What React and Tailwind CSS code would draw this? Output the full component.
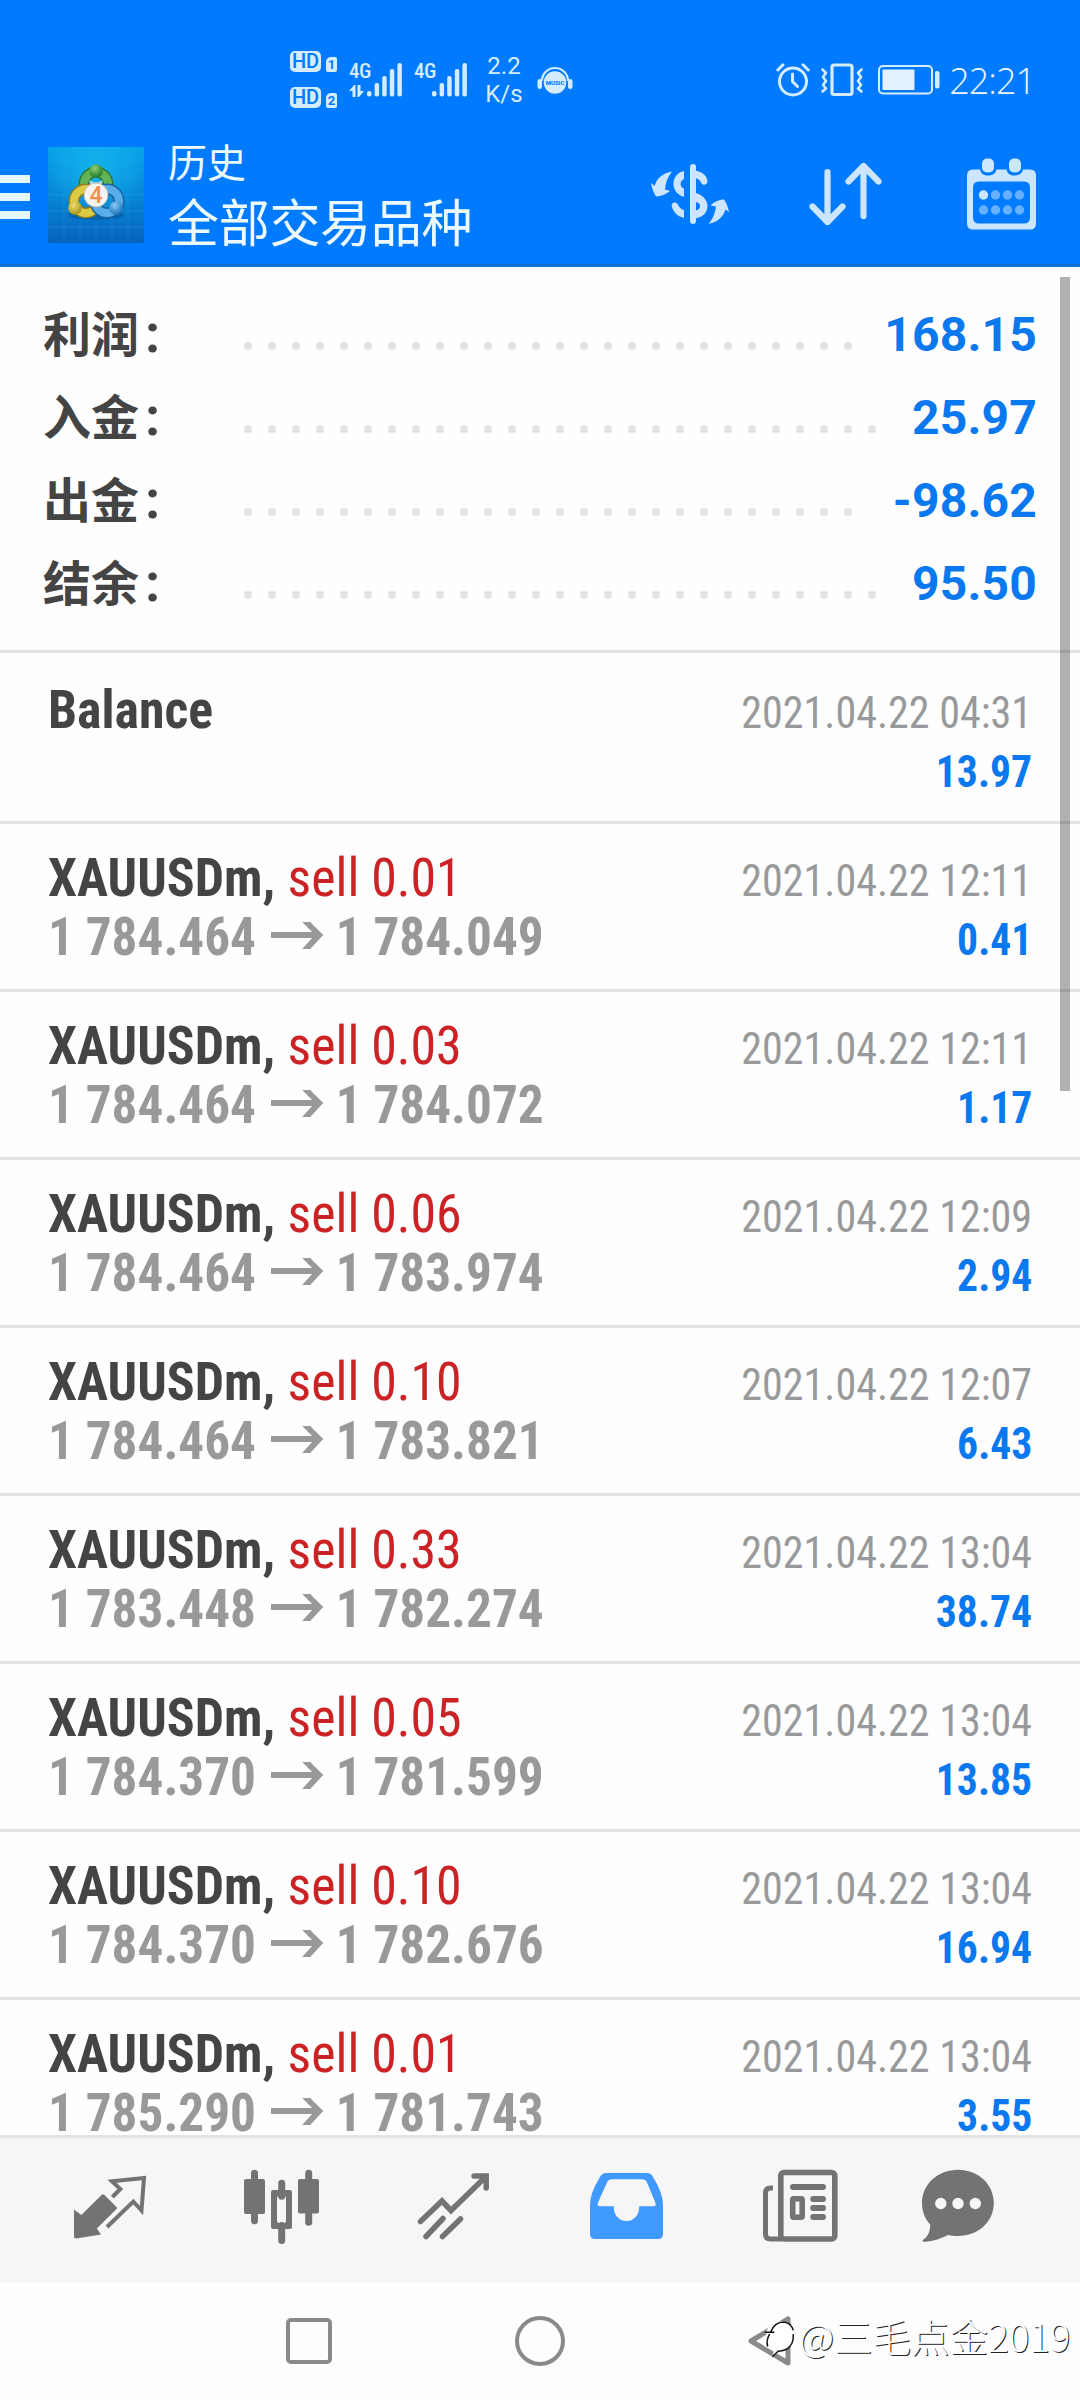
const summary = [
  { label: "利润", value: "168.15", dots: 26 },
  { label: "入金", value: "25.97", dots: 27 },
  { label: "出金", value: "-98.62", dots: 26 },
  { label: "结余", value: "95.50", dots: 27 },
];

const deals = [
  { title: "Balance", date: "2021.04.22 04:31", profit: "13.97" },
  { title: "XAUUSDm,", side: "sell 0.01", open: "1 784.464", close: "1 784.049", date: "2021.04.22 12:11", profit: "0.41" },
  { title: "XAUUSDm,", side: "sell 0.03", open: "1 784.464", close: "1 784.072", date: "2021.04.22 12:11", profit: "1.17" },
  { title: "XAUUSDm,", side: "sell 0.06", open: "1 784.464", close: "1 783.974", date: "2021.04.22 12:09", profit: "2.94" },
  { title: "XAUUSDm,", side: "sell 0.10", open: "1 784.464", close: "1 783.821", date: "2021.04.22 12:07", profit: "6.43" },
  { title: "XAUUSDm,", side: "sell 0.33", open: "1 783.448", close: "1 782.274", date: "2021.04.22 13:04", profit: "38.74" },
  { title: "XAUUSDm,", side: "sell 0.05", open: "1 784.370", close: "1 781.599", date: "2021.04.22 13:04", profit: "13.85" },
  { title: "XAUUSDm,", side: "sell 0.10", open: "1 784.370", close: "1 782.676", date: "2021.04.22 13:04", profit: "16.94" },
  { title: "XAUUSDm,", side: "sell 0.01", open: "1 785.290", close: "1 781.743", date: "2021.04.22 13:04", profit: "3.55" },
];

function HdBadge({ sim }) {
  return (
    <div className="flex items-end gap-[5px]">
      <span className="w-[31px] h-[21px] rounded-[5px] bg-[#d5ecff] text-[#007aff] text-[20px] leading-[21px] text-center font-medium">
        HD
      </span>
      <span className="w-[11px] h-[15px] rounded-[2px] rounded-tl-[5px] bg-[#d5ecff] text-[#007aff] text-[13px] leading-[15px] text-center font-bold">
        {sim}
      </span>
    </div>
  );
}

function Signal({ data }) {
  return (
    <div className="flex items-end h-[34px]">
      <div className="w-[18px] h-[34px] flex flex-col justify-between">
        <span className="font-['Roboto_Condensed'] font-medium text-[21px] leading-[16px] tracking-[-0.5px]">4G</span>
        {data && (
          <svg width="16" height="12" viewBox="0 0 16 12" fill="currentColor">
            <path d="M0 6 L5 0 H6.5 V12 H3.5 V6 Z M8.500 0 H11.500 V6 H15 L10 12 H8.500 Z" />
          </svg>
        )}
      </div>
      <svg width="35" height="34" viewBox="0 0 35 34" fill="currentColor">
        <rect x="0" y="28" width="4.500" height="5.500" rx="2" />
        <rect x="7.600" y="20" width="4.500" height="13.500" rx="2" />
        <rect x="15.200" y="13" width="4.500" height="20.500" rx="2" />
        <rect x="22.800" y="6" width="4.500" height="27.500" rx="2" />
        <rect x="30.400" y="0" width="4.500" height="33.500" rx="2" />
      </svg>
    </div>
  );
}

function StatusBar() {
  return (
    <div className="h-[130px] pt-[29px] pl-[290px] pr-[45px] flex items-center text-[#d5ecff] font-['Roboto',sans-serif]">
      <div className="flex flex-col gap-[15px]">
        <HdBadge sim="1" />
        <HdBadge sim="2" />
      </div>
      <div className="ml-3 flex gap-3">
        <Signal data />
        <Signal />
      </div>
      <div className="ml-[18px] w-[38px] text-center text-[24px] leading-[28px] whitespace-nowrap">
        <p>2.2</p>
        <p>K/s</p>
      </div>
      <svg className="ml-[14px]" width="36" height="28" viewBox="0 0 36 28">
        <path d="M5 15 A13 13 0 0 1 31 15" fill="none" stroke="currentColor" strokeWidth="2.200" />
        <rect x="0.500" y="13" width="4.500" height="10" rx="2.200" fill="currentColor" />
        <rect x="31" y="13" width="4.500" height="10" rx="2.200" fill="currentColor" />
        <circle cx="18" cy="16.500" r="11.200" fill="currentColor" />
        <text x="18" y="18.600" textAnchor="middle" fontSize="6" fontWeight="800" fill="#007aff">MUSIC</text>
      </svg>
      <div className="ml-auto flex items-center">
        <svg width="34" height="34" viewBox="0 0 34 34" fill="none" stroke="currentColor" strokeWidth="3" strokeLinecap="round" strokeLinejoin="round">
          <circle cx="17" cy="18.500" r="13.500" />
          <path d="M16.500 11 V18.500 L21.500 23.500" />
          <path d="M1.800 7 L7 1.800 M27 1.800 L32.200 7" />
        </svg>
        <svg className="ml-[10px]" width="44" height="34" viewBox="0 0 44 34" fill="none" stroke="currentColor" strokeWidth="3.200" strokeLinecap="round" strokeLinejoin="round">
          <rect x="12" y="2" width="20" height="29.500" rx="2" />
          <path strokeWidth="2.600" d="M2.500 6.500 L6 10 L3 14 L6 18 L3 22 L6 25.500 L2.500 28.500 M41.500 6.500 L38 10 L41 14 L38 18 L41 22 L38 25.500 L41.500 28.500" />
        </svg>
        <svg className="ml-[14px]" width="64" height="30" viewBox="0 0 64 30">
          <rect x="1" y="1" width="53" height="27.500" rx="4" fill="none" stroke="currentColor" strokeWidth="2" />
          <rect x="4.500" y="4.500" width="32" height="20.500" rx="1" fill="#e2f0ff" />
          <rect x="57" y="6" width="4.500" height="17.500" rx="2" fill="currentColor" />
        </svg>
        <span className="ml-[7px] pt-0.5 font-['Open_Sans',sans-serif] font-light text-[36px] leading-[40px] tracking-[-1px] text-[#eaf6ff]">22:21</span>
      </div>
    </div>
  );
}

function AppLogo() {
  return (
    <svg width="96" height="96" viewBox="0 0 96 96">
      <defs>
        <linearGradient id="sky" x1="0" y1="0" x2="0" y2="1">
          <stop offset="0" stopColor="#0aa2ea" />
          <stop offset="0.500" stopColor="#0787d6" />
          <stop offset="1" stopColor="#0664bd" />
        </linearGradient>
        <radialGradient id="glow" cx="0.500" cy="0.250" r="0.500">
          <stop offset="0" stopColor="#18c0f0" stopOpacity="0.700" />
          <stop offset="1" stopColor="#18c0f0" stopOpacity="0" />
        </radialGradient>
        <radialGradient id="green" cx="0.400" cy="0.300" r="0.700">
          <stop offset="0" stopColor="#8fd070" />
          <stop offset="1" stopColor="#1f7a2c" />
        </radialGradient>
        <radialGradient id="gold" cx="0.400" cy="0.300" r="0.700">
          <stop offset="0" stopColor="#efe070" />
          <stop offset="1" stopColor="#a8921a" />
        </radialGradient>
        <radialGradient id="azure" cx="0.400" cy="0.300" r="0.700">
          <stop offset="0" stopColor="#86cbf5" />
          <stop offset="1" stopColor="#1f74bd" />
        </radialGradient>
      </defs>
      <rect width="96" height="96" fill="url(#sky)" />
      <rect width="96" height="96" fill="url(#glow)" />
      <path d="M16 0 V96 M32 0 V96 M48 0 V96 M64 0 V96 M80 0 V96 M0 16 H96 M0 32 H96 M0 48 H96 M0 64 H96 M0 80 H96" stroke="#5cc4f5" strokeOpacity="0.140" />
      <ellipse cx="48" cy="68" rx="28" ry="5" fill="#053f7c" opacity="0.350" />
      <circle cx="48" cy="37" r="12" fill="none" stroke="#2b7a33" strokeWidth="11" />
      <circle cx="48" cy="37" r="12" fill="none" stroke="#63b456" strokeWidth="8" />
      <circle cx="38" cy="54" r="12" fill="none" stroke="#8d7d1c" strokeWidth="11" />
      <circle cx="38" cy="54" r="12" fill="none" stroke="#ddca45" strokeWidth="8" />
      <circle cx="59" cy="54" r="12" fill="none" stroke="#1b62a5" strokeWidth="11" />
      <circle cx="59" cy="54" r="12" fill="none" stroke="#57aee8" strokeWidth="8" />
      <path d="M41 33 Q48 38 55 33 L53 38 H43 Z" fill="#eef8e8" opacity="0.800" />
      <circle cx="48" cy="24" r="6.800" fill="url(#green)" />
      <circle cx="27" cy="61" r="6.800" fill="url(#gold)" />
      <circle cx="68" cy="61" r="6.800" fill="url(#azure)" />
      <circle cx="48" cy="48" r="12" fill="#f6f4f2" stroke="#b9b3a4" strokeWidth="0.800" />
      <text x="48" y="56.300" textAnchor="middle" fontFamily="Roboto" fontSize="23" fontWeight="500" fill="#f0904a">4</text>
    </svg>
  );
}

function AppBar() {
  return (
    <div className="h-[134px] flex items-center pb-[6px] pr-[43px]">
      <div className="w-[30px] pt-1.5 flex flex-col gap-[10px]">
        <span className="h-2 bg-[#e6f8ff]" />
        <span className="h-2 bg-[#e6f8ff]" />
        <span className="h-2 bg-[#e6f8ff]" />
      </div>
      <div className="ml-[18px] pt-0.5">
        <AppLogo />
      </div>
      <div className="ml-[24px] text-[#ecfaff] font-['Noto_Sans_CJK_SC',sans-serif]">
        <p className="text-[39px] leading-[48px]">历史</p>
        <p className="mt-1 text-[51px] leading-[64px] tracking-[-0.3px]">全部交易品种</p>
      </div>
      <div className="ml-auto flex items-center text-[#cce6ff]">
        <svg width="80" height="64" viewBox="0 0 80 64" fill="currentColor">
          <rect x="40" y="2" width="6" height="60" rx="3" />
          <path d="M34 9 C20 12 20 31 34 35 V26.500 C29.500 25 29.500 19 34 17 Z" />
          <path d="M34 48 C30 47 29 44 27.500 42 C25 39 20.500 41 22 45 C24 51 28 54.500 34 56 Z" />
          <path d="M44 8.500 C52 9 57 14 57.500 19 C57.500 23.500 52.500 24 51 20.500 C49.500 17.500 48 16.500 44 16 Z" />
          <path fillRule="evenodd" d="M44 30.500 C51 32 57.500 37 57.500 44 C57.500 51 52 56 44 56.500 Z M45.500 40 V48.500 C48.500 48 50 46.500 50 44 C50 42 48.500 40.500 45.500 40 Z" />
          <path d="M22 9.500 C13 11 7 16 4.500 24 L1 21 C2 26 3.500 30.500 6 34.500 C11 34.500 16 32 20 29 L15 27.500 C15.500 21 17.500 15 22 9.500 Z" />
          <path d="M58.500 62 C68 60 73 55 75.500 47.500 L79 50 C78 45 76.500 41 74 37.500 C69 37.500 64 40 60.500 43.500 L66 44.500 C65 51 63 57 58.500 62 Z" />
        </svg>
        <svg className="ml-[79px]" width="74" height="64" viewBox="0 0 74 64" fill="none" stroke="currentColor" strokeWidth="6.200" strokeLinecap="round" strokeLinejoin="round">
          <path d="M18.500 10 V60 M3.500 44.500 L18.500 60 L33.500 44.500" />
          <path d="M54.500 54 V4 M39.500 19.500 L54.500 4 L69.500 19.500" />
        </svg>
        <svg className="ml-[84px]" width="70" height="72" viewBox="0 0 70 72" fill="currentColor">
          <path fillRule="evenodd" d="M6 11.500 H13 C14 16 17 17.500 21 17.500 C25 17.500 28.500 16 29.500 11.500 H39.500 C40.500 16 43.500 17.500 47.500 17.500 C51.500 17.500 55 16 56 11.500 H63 Q69 11.500 69 17.500 V65.500 Q69 71.500 63 71.500 H6 Q0 71.500 0 65.500 V17.500 Q0 11.500 6 11.500 Z M12 23.500 Q6 23.500 6 29.500 V59.500 Q6 65.500 12 65.500 H57 Q63 65.500 63 59.500 V29.500 Q63 23.500 57 23.500 Z" />
          <rect x="15" y="0.500" width="12" height="14" rx="5" />
          <rect x="42" y="0.500" width="12" height="14" rx="5" />
          <circle cx="16.500" cy="37" r="4.700" />
          <g opacity="0.500">
            <circle cx="28.500" cy="37" r="4.700" />
            <circle cx="40.500" cy="37" r="4.700" />
            <circle cx="52.500" cy="37" r="4.700" />
            <circle cx="16.500" cy="52" r="4.700" />
            <circle cx="28.500" cy="52" r="4.700" />
            <circle cx="40.500" cy="52" r="4.700" />
            <circle cx="52.500" cy="52" r="4.700" />
          </g>
        </svg>
      </div>
    </div>
  );
}

function SummaryRow({ label, value, dots }) {
  return (
    <div className="h-[83px] flex items-center font-['Roboto','Noto_Sans_CJK_SC',sans-serif] font-bold">
      <span className="w-[201px] pb-[4px] text-[#444] text-[48px] leading-[79px] font-['Noto_Sans_CJK_SC']">
        {label}
        <span className="ml-[6px] font-['Roboto'] text-[54px] leading-[60px]">:</span>
      </span>
      <div className="flex gap-4 pt-[24px]">
        {Array.from({ length: dots }, (_, i) => (
          <span key={i} className="size-2 rounded-full bg-[#e3e3e3]" />
        ))}
      </div>
      <span className="ml-auto pt-0.5 text-[#0a78ee] text-[48px] leading-[81px] tracking-[0.2px]">{value}</span>
    </div>
  );
}

function DealRow({ title, side, open, close, date, profit }) {
  return (
    <div className="h-[168px] shrink-0 border-t-[3px] border-[#e2e2e2] first:border-transparent pt-[24px] px-[48px] leading-[59px] whitespace-nowrap font-['Roboto_Condensed','Roboto',sans-serif]">
      <div className="h-[59px] flex items-baseline justify-between">
        <p className="text-[54px] origin-left scale-x-[0.96]">
          <span className="font-bold text-[#444]">{title}</span>
          {side && <span className="ml-[13px] text-[#cb2226]">{side}</span>}
        </p>
        <span className="text-[45px] text-[#97999b] origin-right scale-x-[0.935]">{date}</span>
      </div>
      <div className="h-[59px] flex items-baseline justify-between">
        <p className="flex items-baseline text-[54px] font-bold text-[#97999b] origin-left scale-x-[0.949]">
          <span>{open || "\u00a0"}</span>
          {close && (
            <>
              <svg className="ml-4 mr-[13px]" width="55" height="34" viewBox="0 0 52 34" preserveAspectRatio="none" fill="currentColor">
                <path d="M0 11 H41 L31 1 H39 L52 14 L39 28 H31 L41 17 H0 Z" />
              </svg>
              <span>{close}</span>
            </>
          )}
        </p>
        <span className="text-[45px] font-bold text-[#0a78ee] origin-right scale-x-[0.925]">{profit}</span>
      </div>
    </div>
  );
}

function TabIcon({ children, className = "text-[#737373]" }) {
  return (
    <div className={`flex-1 flex justify-center ${className}`}>
      <svg width="84" height="84" viewBox="0 0 84 84" fill="currentColor">
        {children}
      </svg>
    </div>
  );
}

function TabBar() {
  return (
    <div className="h-[148px] px-[24px] pb-[3px] flex items-center border-t-[3px] border-[#e2e4e4] bg-[#f6f6f6]">
      <TabIcon>
        <path d="M6 42.500 L13.300 48 L33.500 28 Q35 26.500 36.500 28 L48.500 40 Q49.500 41 48.500 42 L28.800 61.500 L33 67.500 L8 71.500 Q6 71.500 6 69.500 Z" />
        <path d="M44.300 30 L52.300 22 L44 14.300 L76 11 L73.500 43.500 L65.300 34.500 L39 60" fill="none" stroke="currentColor" strokeWidth="4" />
      </TabIcon>
      <TabIcon>
        <rect x="4" y="12" width="21" height="35" rx="2" />
        <rect x="11" y="2.700" width="7" height="54.500" rx="3.500" />
        <rect x="58" y="12" width="21" height="34.500" rx="2" />
        <rect x="65.200" y="2.700" width="7" height="56" rx="3.500" />
        <rect x="38.200" y="12.700" width="7" height="20" rx="3.500" />
        <rect x="38.200" y="55" width="7" height="22" rx="3.500" />
        <path fillRule="evenodd" d="M33 23 H50 Q52 23 52 25 V60 Q52 62 50 62 H33 Q31 62 31 60 V25 Q31 23 33 23 Z M39 29 Q37 29 37 31 V54 Q37 56 39 56 H44 Q46 56 46 54 V31 Q46 29 44 29 Z" />
      </TabIcon>
      <TabIcon>
        <path d="M8.500 54.500 L30 34 L39 43.500 L74 9.500 M62 9 H74.200 V21 M31 51.500 L14 69.500 M48.500 52 L30.500 69.500" fill="none" stroke="currentColor" strokeWidth="5.500" strokeLinecap="round" />
      </TabIcon>
      <TabIcon className="text-[#4099ff]">
        <path fillRule="evenodd" d="M22 6 H63 Q67 6 69 10 Q79 26 79 38 V67 Q79 72 74 72 H11 Q6 72 6 67 V38 Q6 26 16 10 Q18 6 22 6 Z M28 12.300 Q24.500 12.300 23 15.500 L13.800 36 Q13 39.300 16 39.300 H29.700 C29.700 48 34.500 54 42.500 54 C50.500 54 55.200 48 55.200 39.300 H69.500 Q72.500 39.300 71.500 36 L63 15.500 Q61.500 12.300 58 12.300 Z" />
      </TabIcon>
      <TabIcon>
        <g fill="none" stroke="currentColor" strokeWidth="5.600">
          <rect x="24.800" y="5.500" width="54" height="66.500" rx="3" />
          <path d="M17 21 H14.500 Q9.500 21 9.500 26 V67 Q9.500 72 14.500 72 H26" strokeWidth="5" />
          <path d="M37 20 H67 M57.200 32 H67 M57.200 41 H67 M57.200 50 H67" strokeLinecap="round" strokeWidth="6" />
          <rect x="36.700" y="31.800" width="9.500" height="18.500" rx="1" />
        </g>
      </TabIcon>
      <TabIcon className="text-[#737373] -translate-x-3">
        <path fillRule="evenodd" d="M42 2.700 C62 2.700 77.800 17 77.800 36 C77.800 55 62 69 42 69 C38.500 69 35 68.600 32 68 C24 72 15 74.800 7.500 74.800 Q5.500 74 7.500 72.500 C12.500 69 14.500 63 14.200 57.500 C9 52 6 44.500 6 36 C6 17 22 2.700 42 2.700 Z M24.800 30.800 A5.700 5.700 0 1 0 24.800 42.200 A5.700 5.700 0 1 0 24.800 30.800 Z M42 30.800 A5.700 5.700 0 1 0 42 42.200 A5.700 5.700 0 1 0 42 30.800 Z M59.300 30.800 A5.700 5.700 0 1 0 59.300 42.200 A5.700 5.700 0 1 0 59.300 30.800 Z" />
      </TabIcon>
    </div>
  );
}

function SystemNav() {
  return (
    <div className="relative flex-1 flex items-center justify-center gap-[183px] pb-[2px] bg-[#fdfdfd]">
      <span className="size-[46px] rounded-[5px] border-[4.5px] border-[#8a8a8a]" />
      <span className="size-[50px] rounded-full border-[4.5px] border-[#8a8a8a]" />
      <svg width="46" height="52" viewBox="0 0 46 52" fill="none" stroke="#8a8a8a" strokeWidth="5" strokeLinejoin="round">
        <path d="M40 4 V48 L3 26 Z" />
      </svg>
      {/* watermark over the back button */}
      <div className="absolute left-[763px] top-[30px] flex items-center">
        <svg width="34" height="48" viewBox="0 0 36 48" fill="#fff" stroke="#111" strokeWidth="1.600">
          <path stroke="none" d="M3 20 Q7 6 21 7 Q32 9 33 22 Q32 35 20 38 L10 45 L12 37 Q5 34 6 24 Z" />
          <path fill="none" d="M8 19 Q12 8 22 8 Q30 9 32 17 M2 19 H12 M7 21 Q3 28 5 34 M32 21 Q33 32 25 37 Q20 39 16 39 L10 45" />
        </svg>
        <span className="ml-[2px] -mt-[5px] whitespace-nowrap text-white text-[38.5px] leading-[50px] font-['Noto_Sans_CJK_SC',sans-serif] font-light [text-shadow:1px_1px_0_#222]">
          @三毛点金2019
        </span>
      </div>
    </div>
  );
}

export default function App() {
  return (
    <div className="w-[1080px] h-[2400px] flex flex-col overflow-hidden bg-[#fefefe]">
      <header className="bg-[#007aff] border-b-[3px] border-[#0f6fd0]">
        <StatusBar />
        <AppBar />
      </header>
      <main className="relative h-[1868px] flex flex-col overflow-hidden">
        <section className="h-[386px] shrink-0 pt-[25px] pl-[43px] pr-[43px] border-b-[3px] border-[#e2e2e2]">
          {summary.map((row) => (
            <SummaryRow key={row.label} {...row} />
          ))}
        </section>
        <section className="flex flex-col">
          {deals.map((deal, i) => (
            <DealRow key={i} {...deal} />
          ))}
        </section>
        <div className="absolute right-[10px] top-[10px] w-[10px] h-[814px] bg-black/30" />
      </main>
      <TabBar />
      <SystemNav />
    </div>
  );
}
